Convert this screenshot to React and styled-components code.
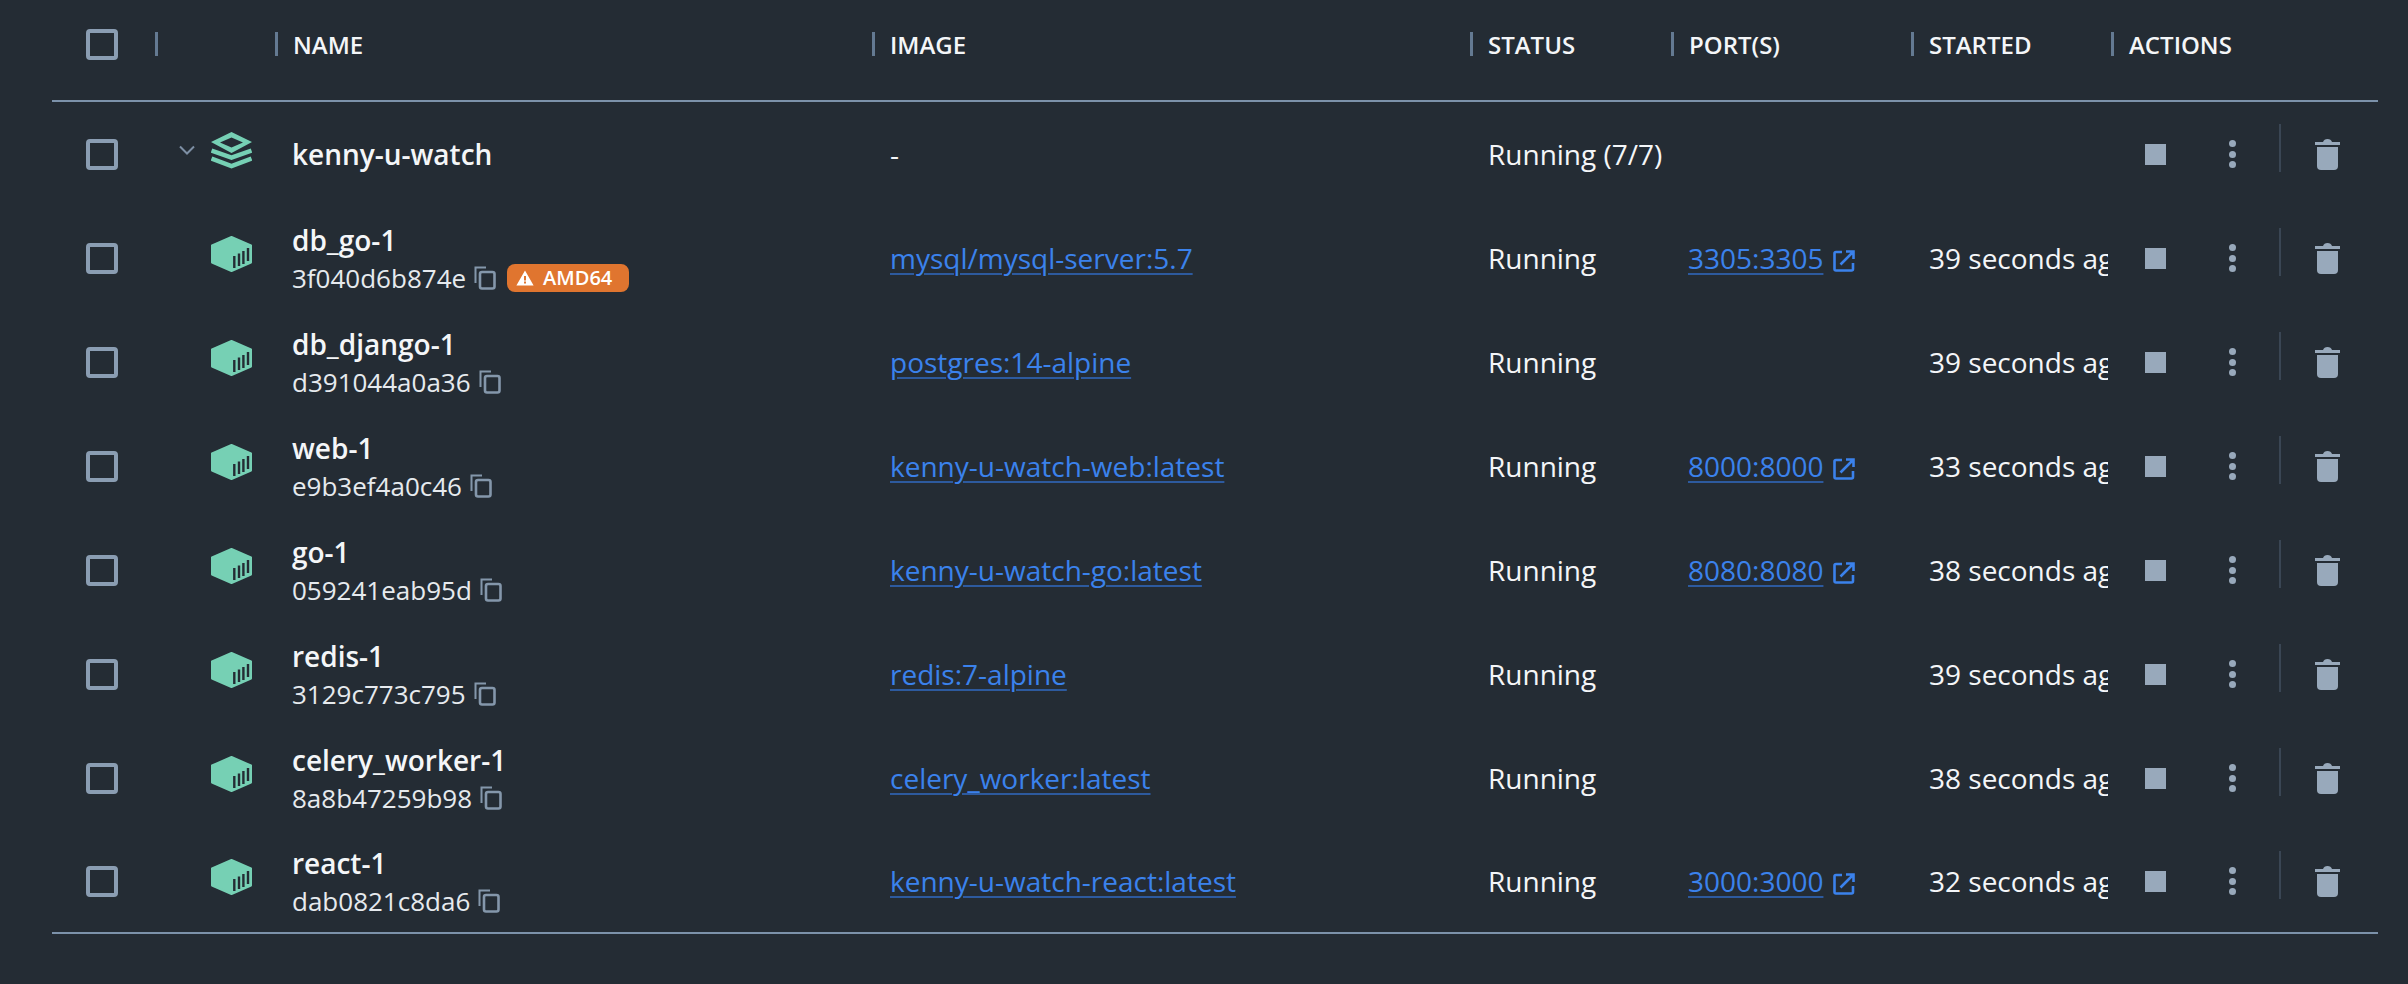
import React from "react"
import styled, { createGlobalStyle } from "styled-components"

const columns = "103px 120px 597px 598px 201px 240px 200px 267px"

const GlobalStyle = createGlobalStyle`
  html, body {
    margin: 0;
    padding: 0;
    background: #242c34;
    font-family: "Open Sans", "Liberation Sans", sans-serif;
  }
`

const Page = styled.div`
  width: 2408px;
  height: 984px;
  box-sizing: border-box;
  padding: 0 30px 0 52px;
  overflow: hidden;
  background: #242c34;
`

const Head = styled.div`
  display: grid;
  grid-template-columns: ${columns};
  align-items: center;
  height: 102px;
  box-sizing: border-box;
  padding-bottom: 12px;
  border-bottom: 2px solid #7c92aa;
`

const HeadCell = styled.div`
  height: 24px;
  display: flex;
  align-items: center;
  padding-left: 15px;
  border-left: 3px solid #647a92;
  color: #f4f6f8;
  font-size: 24px;
  font-weight: 600;
  text-transform: uppercase;
  white-space: nowrap;
`

const Row = styled.div`
  display: grid;
  grid-template-columns: ${columns};
  align-items: center;
  height: 104px;
  box-sizing: border-box;
  &:last-child {
    border-bottom: 2px solid #7c92aa;
  }
`

const CheckCell = styled.div`
  padding-left: 34px;
  display: flex;
  align-items: center;
`

const CheckBox = styled.span`
  display: block;
  width: 32px;
  height: 31px;
  box-sizing: border-box;
  border: 4px solid #8a9db2;
  border-radius: 4px;
`

const IconCell = styled.div`
  display: grid;
  grid-template-columns: 16px 41px;
  column-gap: 16px;
  align-items: center;
  padding-left: 24px;
  margin-bottom: 8px;
  svg {
    display: block;
  }
`

const Cell = styled.div`
  padding-left: 18px;
  min-width: 0;
  overflow: hidden;
  white-space: nowrap;
  color: #f4f6f8;
  font-size: 28px;
  line-height: 40px;
`

const StartedCell = styled(Cell)`
  margin-right: 3px;
`

const NameCell = styled(Cell)`
  padding-left: 17px;
  margin-top: ${p => (p.$group ? "0" : "2px")};
  overflow: visible;
`

const Name = styled.div`
  font-size: 28px;
  font-weight: 600;
  line-height: 38px;
`

const IdLine = styled.div`
  display: flex;
  align-items: center;
  font-size: 26px;
  line-height: 38px;
  color: #e6eaee;
  svg {
    margin-left: 8px;
    flex: none;
  }
`

const Badge = styled.span`
  display: inline-flex;
  align-items: center;
  gap: 9px;
  height: 28px;
  margin-left: 11px;
  padding: 0 17px 0 9px;
  border-radius: 8px;
  background: #e0752f;
  color: #fff;
  font-size: 20px;
  font-weight: 600;
  svg {
    margin-left: 0;
  }
`

const Link = styled.a`
  color: #3b82ec;
  text-decoration: underline;
  text-decoration-color: #2d5a9e;
  text-decoration-thickness: 2px;
  text-underline-offset: 4px;
`

const PortCell = styled(Cell)`
  display: flex;
  align-items: center;
  padding-left: 17px;
  svg {
    flex: none;
    margin: 6px 0 0 10px;
  }
`

const Actions = styled.div`
  display: flex;
  align-items: center;
  padding-left: 34px;
  svg {
    display: block;
  }
`

const StopIcon = styled.span`
  display: block;
  width: 21px;
  height: 21px;
  background: #98a9bb;
`

const Dots = styled.span`
  display: flex;
  flex-direction: column;
  gap: 3.5px;
  margin-left: 63px;
  span {
    display: block;
    width: 7px;
    height: 7px;
    border-radius: 50%;
    background: #98a9bb;
  }
`

const Divider = styled.span`
  display: block;
  width: 2px;
  height: 48px;
  margin: 0 0 12px 43px;
  background: #3a4654;
`

const TrashWrap = styled.span`
  display: block;
  margin-left: 34px;
`

const Cube = () => (
  <svg width="41" height="36" viewBox="0 0 41 36">
    <path d="M20.5 1 L40 9.5 V26.5 L20.5 35 L1 26.5 V9.5 Z" fill="#76d0b4" stroke="#76d0b4" strokeWidth="2" strokeLinejoin="round" />
    <path d="M23.3 32 V20 M28 30 V17.5 M32.4 28 V15 M37 25 V12" stroke="#242c34" strokeWidth="2.4" fill="none" />
  </svg>
)

const Stack = () => (
  <svg width="41" height="37" viewBox="0 0 41 37">
    <path fillRule="evenodd" d="M20.5 0 L41 10 L20.5 21 L0 10 Z M20.5 5.5 L9 10.5 L20.5 15.5 L32 10.5 Z" fill="#76d0b4" />
    <path d="M0.5 18.5 L20.5 25.5 L40.5 18.5 M0.5 26.5 L20.5 34.2 L40.5 26.5" fill="none" stroke="#76d0b4" strokeWidth="4.5" />
  </svg>
)

const Chevron = () => (
  <svg width="16" height="10" viewBox="0 0 16 10">
    <path d="M1 1.5 L8 8.5 L15 1.5" fill="none" stroke="#7d8fa4" strokeWidth="2" />
  </svg>
)

const CopyIcon = () => (
  <svg width="22" height="24" viewBox="0 0 22 24">
    <path d="M1.5 17 V1.5 H12" fill="none" stroke="#8497ab" strokeWidth="2" />
    <rect x="6" y="6" width="14.5" height="16.5" rx="2" fill="none" stroke="#8497ab" strokeWidth="2.6" />
  </svg>
)

const WarnIcon = () => (
  <svg width="18" height="16" viewBox="0 0 18 16">
    <path fillRule="evenodd" d="M9 0.5 L17.6 15.5 H0.4 Z M8 6 V10.5 H10 V6 Z M8 11.5 V13.5 H10 V11.5 Z" fill="#fff" />
  </svg>
)

const OpenIcon = () => (
  <svg width="22" height="22" viewBox="0 0 22 22">
    <path d="M9 2 H3 Q1.5 2 1.5 3.5 V19 Q1.5 20.5 3 20.5 H18.5 Q20 20.5 20 19 V13" fill="none" stroke="#3b82ec" strokeWidth="2.6" />
    <path d="M13 1.5 H20.5 V9 M20 2 L7.5 14.5" fill="none" stroke="#3b82ec" strokeWidth="2.6" />
  </svg>
)

const TrashIcon = () => (
  <svg width="25" height="31" viewBox="0 0 25 31">
    <path d="M0 3 H8 Q9 0 12.5 0 Q16 0 17 3 H25 V6 H0 Z" fill="#98a9bb" />
    <path d="M2 8 H23 V27 Q23 31 19 31 H6 Q2 31 2 27 Z" fill="#98a9bb" />
  </svg>
)

const headers = ["", "Name", "Image", "Status", "Port(s)", "Started", "Actions"]

const containers = [
  { name: "db_go-1", id: "3f040d6b874e", image: "mysql/mysql-server:5.7", port: "3305:3305", started: "39 seconds ago", amd: true },
  { name: "db_django-1", id: "d391044a0a36", image: "postgres:14-alpine", started: "39 seconds ago" },
  { name: "web-1", id: "e9b3ef4a0c46", image: "kenny-u-watch-web:latest", port: "8000:8000", started: "33 seconds ago" },
  { name: "go-1", id: "059241eab95d", image: "kenny-u-watch-go:latest", port: "8080:8080", started: "38 seconds ago" },
  { name: "redis-1", id: "3129c773c795", image: "redis:7-alpine", started: "39 seconds ago" },
  { name: "celery_worker-1", id: "8a8b47259b98", image: "celery_worker:latest", started: "38 seconds ago" },
  { name: "react-1", id: "dab0821c8da6", image: "kenny-u-watch-react:latest", port: "3000:3000", started: "32 seconds ago" },
]

const RowActions = () => (
  <Actions>
    <StopIcon />
    <Dots>
      <span />
      <span />
      <span />
    </Dots>
    <Divider />
    <TrashWrap>
      <TrashIcon />
    </TrashWrap>
  </Actions>
)

const App = () => {
  return (
    <Page>
      <GlobalStyle />
      <Head>
        <CheckCell>
          <CheckBox />
        </CheckCell>
        {headers.map((h, i) => (
          <HeadCell key={i}>{h}</HeadCell>
        ))}
      </Head>
      <Row>
        <CheckCell>
          <CheckBox />
        </CheckCell>
        <IconCell>
          <Chevron />
          <Stack />
        </IconCell>
        <NameCell $group>
          <Name>kenny-u-watch</Name>
        </NameCell>
        <Cell>-</Cell>
        <Cell>Running (7/7)</Cell>
        <Cell />
        <Cell />
        <RowActions />
      </Row>
      {containers.map(c => (
        <Row key={c.id}>
          <CheckCell>
            <CheckBox />
          </CheckCell>
          <IconCell>
            <span />
            <Cube />
          </IconCell>
          <NameCell>
            <Name>{c.name}</Name>
            <IdLine>
              {c.id}
              <CopyIcon />
              {c.amd && (
                <Badge>
                  <WarnIcon />
                  AMD64
                </Badge>
              )}
            </IdLine>
          </NameCell>
          <Cell>
            <Link>{c.image}</Link>
          </Cell>
          <Cell>Running</Cell>
          {c.port ? (
            <PortCell>
              <Link>{c.port}</Link>
              <OpenIcon />
            </PortCell>
          ) : (
            <Cell />
          )}
          <StartedCell>{c.started}</StartedCell>
          <RowActions />
        </Row>
      ))}
    </Page>
  )
}

export default App
